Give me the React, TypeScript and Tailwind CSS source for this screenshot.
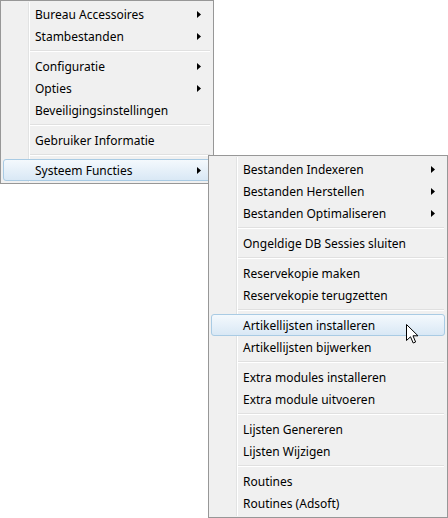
type Entry = { label: string; sub?: boolean; active?: boolean } | "sep";

const mainItems: Entry[] = [
  { label: "Bureau Accessoires", sub: true },
  { label: "Stambestanden", sub: true },
  "sep",
  { label: "Configuratie", sub: true },
  { label: "Opties", sub: true },
  { label: "Beveiligingsinstellingen" },
  "sep",
  { label: "Gebruiker Informatie" },
  "sep",
  { label: "Systeem Functies", sub: true, active: true },
];

const subItems: Entry[] = [
  { label: "Bestanden Indexeren", sub: true },
  { label: "Bestanden Herstellen", sub: true },
  { label: "Bestanden Optimaliseren", sub: true },
  "sep",
  { label: "Ongeldige DB Sessies sluiten" },
  "sep",
  { label: "Reservekopie maken" },
  { label: "Reservekopie terugzetten" },
  "sep",
  { label: "Artikellijsten installeren", active: true },
  { label: "Artikellijsten bijwerken" },
  "sep",
  { label: "Extra modules installeren" },
  { label: "Extra module uitvoeren" },
  "sep",
  { label: "Lijsten Genereren" },
  { label: "Lijsten Wijzigen" },
  "sep",
  { label: "Routines" },
  { label: "Routines (Adsoft)" },
];

const Arrow = () => (
  <svg width="4" height="7" viewBox="0 0 4 7" className="shrink-0">
    <path d="M0 0 L4 3.5 L0 7 Z" fill="#000" />
  </svg>
);

const Menu = ({ items }: { items: Entry[] }) => (
  <div className="relative h-full w-full border border-[#979797] bg-[#f0f0f0] p-[2px]">
    {/* gutter line */}
    <div className="absolute top-[1px] bottom-[1px] left-[27px] w-[1px] bg-[#e2e3e3]" />
    <div className="absolute top-[1px] bottom-[1px] left-[28px] w-[1px] bg-white" />
    {items.map((it, i) =>
      it === "sep" ? (
        <div key={i} className="relative flex h-[8px] flex-col justify-center pl-[27px] pr-[1px]">
          <div className="h-[1px] bg-[#e0e0e0]" />
          <div className="h-[1px] bg-white" />
        </div>
      ) : (
        <div
          key={i}
          className={
            it.active
              ? "relative flex h-[22px] items-center justify-between rounded-[3px] border border-[#a9cbe4] bg-gradient-to-b from-[#f4f9fd] to-[#d9e8f5] pl-[31px] pr-[9px]"
              : "relative flex h-[22px] items-center justify-between pl-[32px] pr-[10px]"
          }
        >
          <span className="pt-[1px] leading-none">{it.label}</span>
          {it.sub && <Arrow />}
        </div>
      )
    )}
  </div>
);

const Cursor = () => (
  <svg width="13" height="20" viewBox="0 0 13 20" className="absolute left-[406px] top-[324px]">
    <path
      d="M0.5 0.5 L0.5 16.5 L4.5 12.8 L7.2 19 L9.6 18 L7 11.8 L12 11.8 Z"
      fill="#fff"
      stroke="#000"
      strokeWidth="1"
      strokeLinejoin="miter"
    />
  </svg>
);

export default function App() {
  return (
    <div
      className="relative h-[518px] w-[448px] overflow-hidden bg-white text-[12px] text-black"
      style={{ fontFamily: '"Noto Sans", "Open Sans", sans-serif' }}
    >
      <div className="h-[184px] w-[214px]">
        <Menu items={mainItems} />
      </div>
      <div className="absolute left-[208px] top-[155px] h-[363px] w-[240px]">
        <Menu items={subItems} />
      </div>
      <Cursor />
    </div>
  );
}
